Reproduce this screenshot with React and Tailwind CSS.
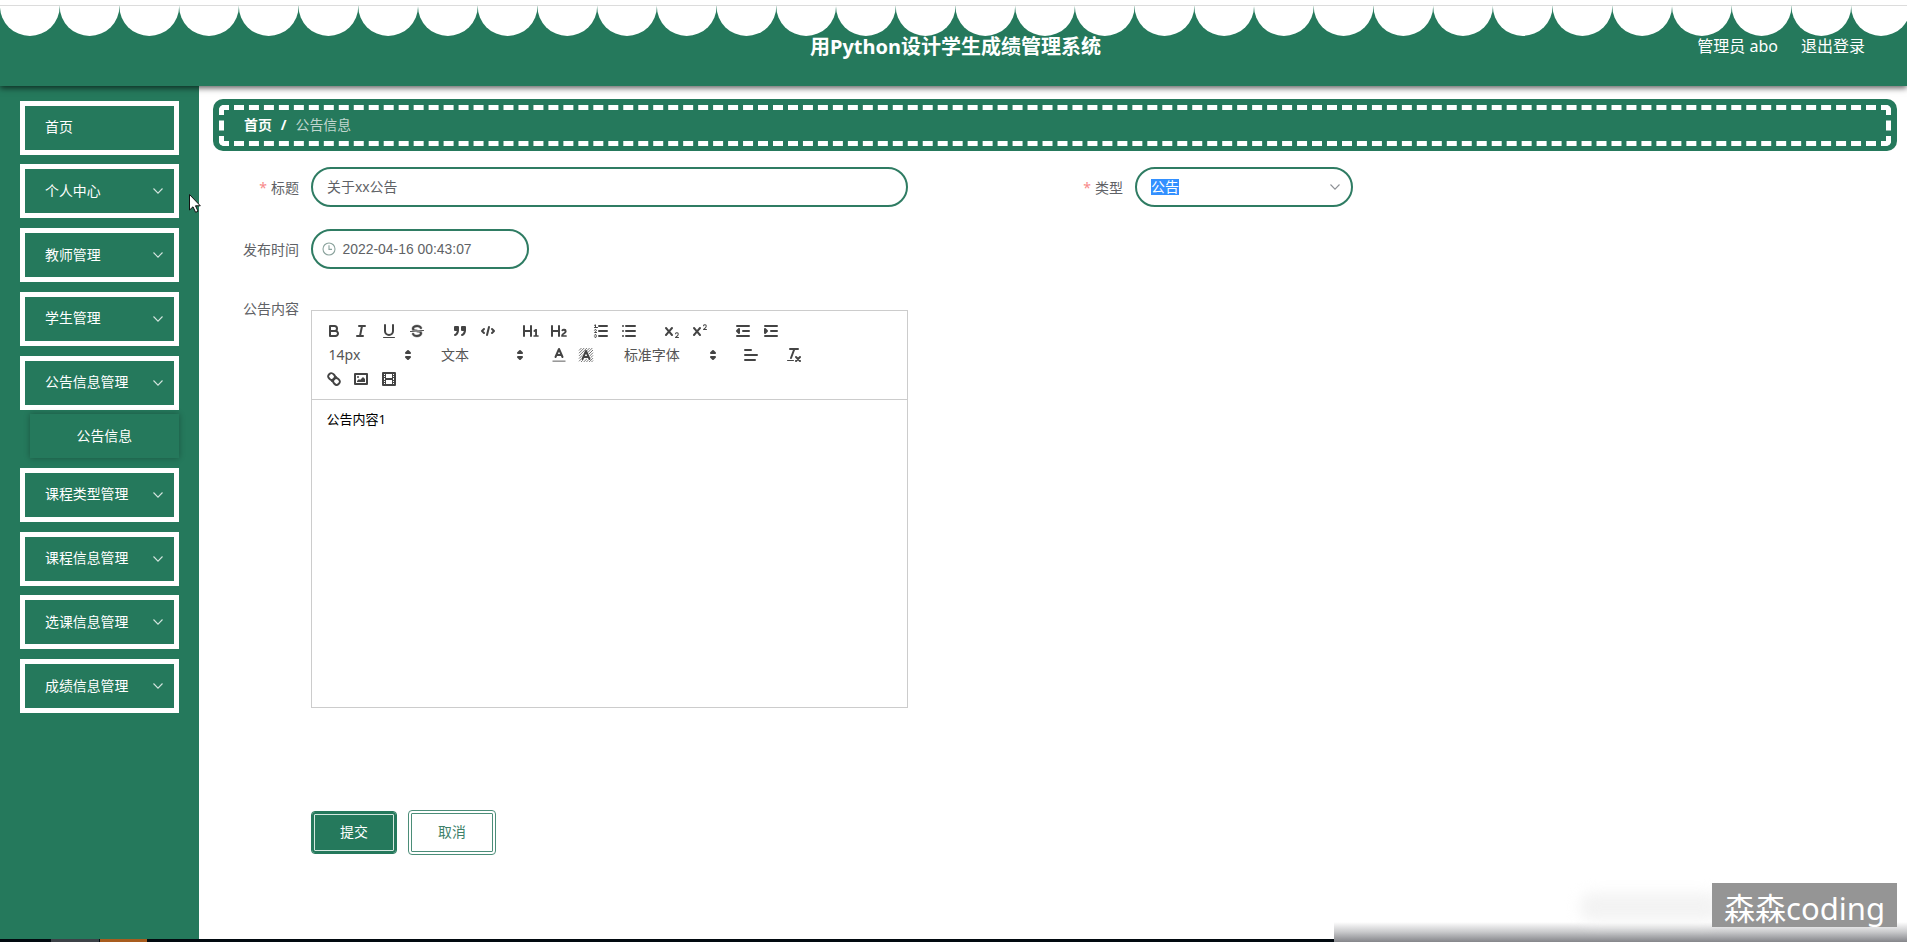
import React from "react";

const X_MARK =
  "M9.65,5.241a1,1,0,0,0-1.409.108L6,7.964,3.759,5.349A1,1,0,0,0,2.192,6.59178Q2.21541,6.6213,2.241,6.649L4.684,9.5,2.241,12.35A1,1,0,0,0,3.71,13.70722q0.02557-.02768.049-0.05722L6,11.036,8.241,13.65a1,1,0,1,0,1.567-1.24277Q9.78459,12.3777,9.759,12.35L7.316,9.5,9.759,6.651A1,1,0,0,0,9.65,5.241Z";

const fill = { fill: "#444", stroke: "none" };

const ICONS = {
  bold: (
    <>
      <path d="M5,4H9.5A2.5,2.5,0,0,1,12,6.5v0A2.5,2.5,0,0,1,9.5,9H5V4Z" />
      <path d="M5,9h5.5A2.5,2.5,0,0,1,13,11.5v0A2.5,2.5,0,0,1,10.5,14H5V9Z" />
    </>
  ),
  italic: <path d="M7,4H13M5,14H11M8,14L10,4" />,
  underline: (
    <>
      <path d="M5,3V9a4.012,4.012,0,0,0,4,4H9a4.012,4.012,0,0,0,4-4V3" />
      <rect {...fill} height="1" width="12" rx=".5" x="3" y="15" />
    </>
  ),
  strike: (
    <>
      <path strokeWidth="1" d="M15.5,8.5L2.5,9.5" />
      <path fill="#444" strokeWidth=".4" d="M9.007,8C6.542,7.791,6,7.519,6,6.5,6,5.792,7.283,5,9,5c1.571,0,2.765.679,2.969,1.309a1,1,0,0,0,1.9-.617C13.356,4.106,11.354,3,9,3,6.2,3,4,4.538,4,6.5a3.2,3.2,0,0,0,.5,1.843Z" />
      <path fill="#444" strokeWidth=".4" d="M8.984,10C11.457,10.208,12,10.479,12,11.5c0,0.708-1.283,1.5-3,1.5-1.571,0-2.765-.679-2.969-1.309a1,1,0,1,0-1.9.617C4.644,13.894,6.646,15,9,15c2.8,0,5-1.538,5-3.5a3.2,3.2,0,0,0-.5-1.843Z" />
    </>
  ),
  quote: (
    <g fill="#444">
      <rect height="3" width="3" x="4" y="5" />
      <rect height="3" width="3" x="11" y="5" />
      <path d="M7,8c0,4.031-3,5-3,5" />
      <path d="M14,8c0,4.031-3,5-3,5" />
    </g>
  ),
  code: <path d="M5,7L3,9L5,11M13,7L15,9L13,11M10,5L8,13" />,
  h1: (
    <path {...fill} d="M10,4V14a1,1,0,0,1-2,0V10H3v4a1,1,0,0,1-2,0V4A1,1,0,0,1,3,4V8H8V4a1,1,0,0,1,2,0Zm6.06787,9.209H14.98975V7.59863a.54085.54085,0,0,0-.605-.60547h-.62744a1.01119,1.01119,0,0,0-.748.29688L11.645,8.56641a.5435.5435,0,0,0-.022.8584l.28613.30762a.53861.53861,0,0,0,.84717.0332l.09912-.08789a1.2137,1.2137,0,0,0,.2417-.35254h.02246s-.01123.30859-.01123.60547V13.209H12.041a.54085.54085,0,0,0-.605.60547v.43945a.54085.54085,0,0,0,.605.60547h4.02686a.54085.54085,0,0,0,.605-.60547v-.43945A.54085.54085,0,0,0,16.06787,13.209Z" />
  ),
  h2: (
    <path {...fill} d="M16.73975,13.81445v.43945a.54085.54085,0,0,1-.605.60547H11.855a.58392.58392,0,0,1-.64893-.60547V14.0127c0-2.90527,3.39941-3.42187,3.39941-4.55469a.77675.77675,0,0,0-.84717-.78125,1.17684,1.17684,0,0,0-.83594.38477c-.2749.26367-.561.374-.85791.13184l-.4292-.34082c-.30811-.24219-.38525-.51758-.1543-.81445a2.97155,2.97155,0,0,1,2.45361-1.17676,2.45393,2.45393,0,0,1,2.68408,2.40918c0,2.45312-3.1792,2.92676-3.27832,3.93848h2.79443A.54085.54085,0,0,1,16.73975,13.81445ZM9,3A.99974.99974,0,0,0,8,4V8H3V4A1,1,0,0,0,1,4V14a1,1,0,0,0,2,0V10H8v4a1,1,0,0,0,2,0V4A.99974.99974,0,0,0,9,3Z" />
  ),
  ordered: (
    <>
      <path d="M7,4H15M7,9H15M7,14H15" />
      <path strokeWidth="1" d="M2.5,5.5H5.5M3.5,5.5V2.8l-1,.5M4.5,10.5h-2c0-.234,1.85-1.076,1.85-2.234A0.959,0.959,0,0,0,2.5,8.156M2.5,14.846a0.959,0.959,0,0,0,1.85-.109A0.7,0.7,0,0,0,3.75,14a0.688,0.688,0,0,0,.6-0.736,0.959,0.959,0,0,0-1.85-.109" />
    </>
  ),
  bullet: <path d="M6,4H15M6,9H15M6,14H15M3,4H3M3,9H3M3,14H3" />,
  sub: (
    <g {...fill}>
      <path d="M15.5,15H13.861a3.858,3.858,0,0,0,1.914-2.975,1.8,1.8,0,0,0-1.6-1.751A1.921,1.921,0,0,0,12.021,11.7a0.50013,0.50013,0,1,0,.957.291h0a0.914,0.914,0,0,1,1.053-.725,0.81,0.81,0,0,1,.744.762c0,1.076-1.16971,1.86982-1.93971,2.43082A1.45639,1.45639,0,0,0,12,15.5a0.5,0.5,0,0,0,.5.5h3A0.5,0.5,0,0,0,15.5,15Z" />
      <path d={X_MARK} />
    </g>
  ),
  sup: (
    <g {...fill}>
      <path d="M15.5,7H13.861a4.015,4.015,0,0,0,1.914-2.975,1.8,1.8,0,0,0-1.6-1.751A1.922,1.922,0,0,0,12.021,3.7a0.5,0.5,0,1,0,.957.291,0.917,0.917,0,0,1,1.053-.725,0.81,0.81,0,0,1,.744.762c0,1.077-1.164,1.925-1.934,2.486A1.423,1.423,0,0,0,12,7.5a0.5,0.5,0,0,0,.5.5h3A0.5,0.5,0,0,0,15.5,7Z" />
      <path d={X_MARK} />
    </g>
  ),
  outdent: (
    <>
      <path d="M3,14H15M3,4H15M9,9H15" />
      <path fill="#444" d="M5,7V11L3,9Z" />
    </>
  ),
  indent: (
    <>
      <path d="M3,14H15M3,4H15M9,9H15" />
      <path fill="#444" d="M3,7V11L5,9Z" />
    </>
  ),
  color: (
    <>
      <path stroke="#999" strokeWidth="1.6" strokeLinecap="butt" d="M2.5,15.2H15.5" />
      <path d="M5.5,11L9,3L12.5,11M11.63,9H6.38" />
    </>
  ),
  background: (
    <>
      <path
        stroke="#666"
        strokeWidth=".9"
        strokeLinecap="butt"
        d="M2,4.5L4.5,2M2,7.2L7.2,2M2,9.9L9.9,2M2,12.6L12.6,2M2,15.3L15.3,2M4,16L16,4M6.7,16L16,6.7M9.4,16L16,9.4M12.1,16L16,12.1M14.5,16L16,14.5"
      />
      <path stroke="#fff" strokeWidth="3.6" fill="#fff" d="M6,12.5L9,6L12,12.5" />
      <path d="M5.5,13L9,5L12.5,13M11.63,11H6.38" />
    </>
  ),
  align: <path d="M3,9H15M3,14H13M3,4H9" />,
  clean: (
    <>
      <path d="M5,3H13M6,12L9.35,3M11,11L15,15M15,11L11,15" />
      <rect {...fill} height="1" width="7" rx=".5" x="2" y="14" />
    </>
  ),
  link: (
    <>
      <path d="M7,11L11,7" />
      <path d="M8.9,4.577a3.476,3.476,0,0,1,.36,4.679A3.476,3.476,0,0,1,4.577,8.9C3.185,7.5,2.035,6.4,4.217,4.217S7.5,3.185,8.9,4.577Z" />
      <path d="M13.423,9.1a3.476,3.476,0,0,0-4.679-.36,3.476,3.476,0,0,0,.36,4.679c1.392,1.392,2.5,2.542,4.679.36S14.815,10.5,13.423,9.1Z" />
    </>
  ),
  image: (
    <>
      <rect height="10" width="12" x="3" y="4" />
      <circle {...fill} cx="6" cy="7" r="1" />
      <path {...fill} d="M5,12V11L7,9L8,10L11,7L13,9V12Z" />
    </>
  ),
  video: (
    <>
      <rect height="12" width="12" x="3" y="3" />
      <path {...fill} d="M5,3h1v12h-1ZM12,3h1v12h-1ZM5,8h8v2h-8ZM3,5h3v1h-3ZM3,7h3v1h-3ZM3,10h3v1h-3ZM3,12h3v1h-3ZM12,5h3v1h-3ZM12,7h3v1h-3ZM12,10h3v1h-3ZM12,12h3v1h-3Z" />
    </>
  ),
  picker: <path fill="#444" d="M7,11L9,13L11,11ZM7,7L9,5L11,7Z" />,
};

function Icon({ name }) {
  return (
    <svg
      viewBox="0 0 18 18"
      className="size-[18px] shrink-0"
      fill="none"
      stroke="#444"
      strokeWidth="2"
      strokeLinecap="round"
      strokeLinejoin="round"
    >
      {ICONS[name]}
    </svg>
  );
}

function Tools({ names }) {
  return (
    <div className="flex">
      {names.map((n) => (
        <button key={n} type="button" className="flex h-6 w-[27.9px] items-center justify-center">
          <Icon name={n} />
        </button>
      ))}
    </div>
  );
}

function Picker({ label, wide }) {
  return (
    <div className={`flex h-6 items-center justify-between pr-px pl-[9px] text-sm leading-6 text-[#555] ${wide ? "w-[108px]" : "w-[98px]"}`}>
      <span>{label}</span>
      <Icon name="picker" />
    </div>
  );
}

function Chevron({ className }) {
  return (
    <svg viewBox="0 0 12 8" className={className} fill="none" stroke="currentColor" strokeWidth="1.1">
      <path d="M1.5 1.5 6 6.2 10.5 1.5" />
    </svg>
  );
}

function MenuItem({ label, plain }) {
  return (
    <div className="flex h-[54px] items-center justify-between border-[5px] border-white pr-[10px] pl-5 text-[13.9px] text-white">
      <span>{label}</span>
      {!plain && <Chevron className="h-2 w-3 text-white/80" />}
    </div>
  );
}

function Label({ children, required, className = "" }) {
  return (
    <div className={`w-[86px] text-right text-[14px] text-[#606266] ${className}`}>
      {required && <span className="mr-1 text-[#f78989]">*</span>}
      {children}
    </div>
  );
}

export default function App() {
  return (
    <div className="relative flex h-[942px] w-[1907px] flex-col overflow-hidden bg-white font-['Noto_Sans','Noto_Sans_CJK_SC',sans-serif]">
      <div className="relative z-20 h-1.5 shrink-0 border-b border-[#dcdcdc] bg-white" />
      <header className="relative z-10 flex h-20 shrink-0 items-start bg-[#25795c] shadow-[0_2px_6px_rgba(0,0,0,0.65)]">
        <svg className="absolute top-0 left-0 h-[30px] w-[1907px]">
          {Array.from({ length: 32 }, (_, i) => (
            <circle key={i} cx={29.86 + i * 59.715} cy="0" r="29.9" fill="#fff" />
          ))}
        </svg>
        <div className="relative w-[417px]" />
        <h1 className="relative mt-[27px] flex-1 text-center text-[20px] leading-7 font-bold text-white">
          用Python设计学生成绩管理系统
        </h1>
        <div className="relative mt-7 flex w-[413px] justify-end gap-[23px] pr-[42px] text-base leading-6 text-white">
          <span>管理员 abo</span>
          <span>退出登录</span>
        </div>
      </header>

      <div className="flex min-h-0 flex-1">
        <aside className="flex w-[199px] shrink-0 flex-col gap-[9.75px] bg-[#25795c] px-5 pt-[14.6px]">
          <MenuItem label="首页" plain />
          <MenuItem label="个人中心" />
          <MenuItem label="教师管理" />
          <MenuItem label="学生管理" />
          <MenuItem label="公告信息管理" />
          <div className="-mt-[5.3px] ml-[10px] flex h-11 items-center pl-[46.5px] text-[13.9px] text-white shadow-[0_0_6px_rgba(0,0,0,0.3)]">
            公告信息
          </div>
          <MenuItem label="课程类型管理" />
          <MenuItem label="课程信息管理" />
          <MenuItem label="选课信息管理" />
          <MenuItem label="成绩信息管理" />
        </aside>

        <main className="flex flex-1 flex-col pt-[13px] pr-[10px] pl-[14px]">
          <nav className="h-[52px] shrink-0 rounded-[10px] bg-[#25795c] p-1.5">
            <div className="flex h-[41px] items-center rounded-[5px] border-[5px] border-dashed border-white pl-5 text-[13.9px] text-[#c0d6ce]">
              <b className="text-white">首页</b>
              <b className="mx-[9px] text-white">/</b>
              <span>公告信息</span>
            </div>
          </nav>

          <form className="flex flex-col">
            <div className="mt-4 flex h-10 items-center">
              <Label required>标题</Label>
              <div className="ml-[11.6px] flex h-10 w-[597px] items-center rounded-full border-2 border-[#2f7c63] pl-[14.5px] text-[13.9px] text-[#606266]">
                关于xx公告
              </div>
              <div className="w-[129.4px]" />
              <Label required>类型</Label>
              <div className="ml-[11.6px] flex h-10 w-[218px] items-center justify-between rounded-full border-2 border-[#2f7c63] pr-[10px] pl-[14.5px] text-[13.9px]">
                <span className="bg-[#3390ff] leading-4 text-white">公告</span>
                <Chevron className="h-2 w-3 text-[#8d9095]" />
              </div>
            </div>

            <div className="mt-[22px] flex h-10 items-center">
              <Label>发布时间</Label>
              <div className="ml-[11.6px] flex h-10 w-[218.5px] items-center gap-[7px] rounded-full border-2 border-[#2f7c63] pl-[9px] text-[#606266]">
                <svg viewBox="0 0 14 14" className="size-[14px]" fill="none" stroke="#8ba39d" strokeWidth="1.1">
                  <circle cx="7" cy="7" r="6" />
                  <path d="M7 3.3V7.4H10" />
                </svg>
                <span className="font-['Liberation_Sans',sans-serif] text-[13.9px]">2022-04-16 00:43:07</span>
              </div>
            </div>

            <div className="mt-[30px] flex items-start">
              <Label className="leading-5">公告内容</Label>
              <div className="mt-[11px] ml-[11.6px] flex h-[398px] w-[597px] flex-col border border-[#ccc] text-[#444]">
                <div className="flex flex-col border-b border-[#ccc] p-2">
                  <div className="flex gap-[14.9px]">
                    <Tools names={["bold", "italic", "underline", "strike"]} />
                    <Tools names={["quote", "code"]} />
                    <Tools names={["h1", "h2"]} />
                    <Tools names={["ordered", "bullet"]} />
                    <Tools names={["sub", "sup"]} />
                    <Tools names={["outdent", "indent"]} />
                  </div>
                  <div className="flex gap-[14.5px]">
                    <Picker label="14px" />
                    <Picker label="文本" />
                    <Tools names={["color", "background"]} />
                    <Picker label="标准字体" wide />
                    <Tools names={["align"]} />
                    <Tools names={["clean"]} />
                  </div>
                  <Tools names={["link", "image", "video"]} />
                </div>
                <p className="px-[15px] pt-[10px] text-[13px] leading-[18px] text-black">公告内容1</p>
              </div>
            </div>

            <div className="mt-[102px] ml-[98px] flex items-center gap-[11px]">
              <button type="button" className="h-[43px] w-[86px] rounded-[4px] border-4 border-double border-[#d5e8e0] bg-[#25795c] text-[13.9px] text-white outline-1 -outline-offset-1 outline-[#25795c]">
                提交
              </button>
              <button type="button" className="h-[45px] w-[88px] rounded-[4px] border-4 border-double border-[#4b8d78] bg-white text-[13.9px] text-[#3d8069]">
                取消
              </button>
            </div>
          </form>
        </main>
      </div>

      {/* screen-bottom strip and channel watermark lie over the page */}
      <div className="absolute bottom-0 left-0 flex h-[3px] w-[1334px] bg-[#020a10]">
        <div className="ml-[51px] h-full w-[48px] bg-[#3c4147]" />
        <div className="ml-px h-full w-[47px] bg-[#a85c1e]" />
      </div>
      <div className="absolute right-0 bottom-0 h-[20px] w-[573px] bg-linear-to-b from-white/0 via-[#c8c9cb] to-[#85868a]" />
      <div className="absolute top-[893px] left-[1580px] h-[28px] w-[140px] rounded-xl bg-[#f3f3f3] blur-[7px]" />
      <div className="absolute top-[883px] left-[1712px] flex h-[44px] w-[185px] items-center justify-center bg-[#959595] text-[31px] leading-none whitespace-nowrap text-white">
        <span className="mt-[7px]">森森coding</span>
      </div>
      <svg className="absolute top-[193px] left-[188px] z-20 h-[21px] w-[14px]" viewBox="0 0 14 21">
        <path d="M1.5 1.5V17L5 13.8L7.6 19.3L10 18.2L7.5 12.8H12.3Z" fill="#fff" stroke="#111" strokeWidth="1" />
      </svg>
    </div>
  );
}
